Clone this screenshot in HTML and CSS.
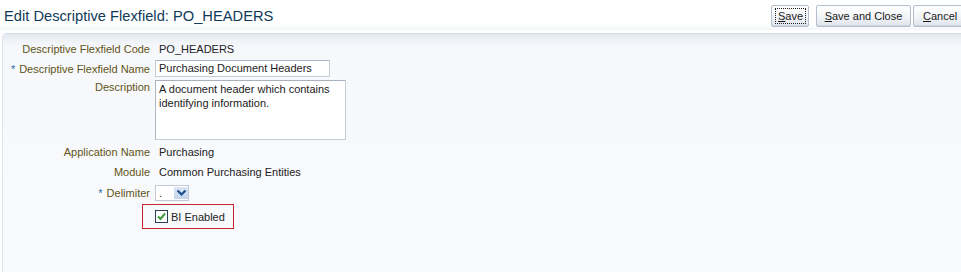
FILE: index.html
```html
<!DOCTYPE html>
<html>
<head>
<meta charset="utf-8">
<link rel="stylesheet" href="styles.css">
</head>
<body>
<div class="page">
  <header class="header">
    <h1 class="title">Edit Descriptive Flexfield: PO_HEADERS</h1>
    <div class="actions">
      <button class="btn btn-save"><span class="focus"><u>S</u>ave</span></button>
      <button class="btn btn-sc"><u>S</u>ave and Close</button>
      <button class="btn btn-cancel"><u>C</u>ancel</button>
    </div>
  </header>
  <div class="panel">
    <div class="form">
      <div class="label r1">Descriptive Flexfield Code</div>
      <div class="value r1"><span class="text">PO_HEADERS</span></div>

      <div class="label r2"><span class="req">*</span><span>Descriptive Flexfield Name</span></div>
      <div class="value r2"><div class="input">Purchasing Document Headers</div></div>

      <div class="label r3 top">Description</div>
      <div class="value r3"><div class="textarea">A document header which contains identifying information.</div></div>

      <div class="label r4">Application Name</div>
      <div class="value r4"><span class="text">Purchasing</span></div>

      <div class="label r5">Module</div>
      <div class="value r5"><span class="text">Common Purchasing Entities</span></div>

      <div class="label r6"><span class="req">*</span><span>Delimiter</span></div>
      <div class="value r6">
        <div class="select"><span class="sel-text">.</span><span class="sel-btn"><svg width="11" height="8" viewBox="0 0 11 8"><path d="M1.5 1.5 L5.5 5.5 L9.5 1.5" fill="none" stroke="#1f4f8a" stroke-width="2.2"/></svg></span></div>
      </div>

      <div class="value r7">
        <div class="highlight">
          <span class="check"><svg width="11" height="11" viewBox="0 0 11 11"><path d="M2 5.5 L4.5 8 L9 2.5" fill="none" stroke="#3f9a3a" stroke-width="2"/></svg></span>
          <span class="cb-label">BI Enabled</span>
        </div>
      </div>
    </div>
  </div>
</div>
</body>
</html>
```

FILE: styles.css
```css
html, body {
  margin: 0;
  padding: 0;
}
body {
  width: 961px;
  height: 272px;
  overflow: hidden;
  font-family: "Liberation Sans", Arial, sans-serif;
  font-size: 11px;
  background: #ffffff;
}
.page {
  display: flex;
  flex-direction: column;
  height: 272px;
}
.header {
  display: flex;
  justify-content: space-between;
  align-items: flex-start;
  height: 30px;
  flex: none;
  background: linear-gradient(#ffffff 0px, #ffffff 24px, #f3f6f9 30px);
}
.title {
  margin: 7px 0 0 4px;
  font-size: 14.7px;
  font-weight: normal;
  color: #0f3a58;
  line-height: 18px;
}
.actions {
  display: flex;
  margin-top: 5px;
  margin-right: -6px;
}
.btn {
  font-family: "Liberation Sans", Arial, sans-serif;
  font-size: 11px;
  color: #1a1a1a;
  height: 22px;
  padding: 0 6px;
  border: 1px solid #b4bfcb;
  border-radius: 2px;
  background: linear-gradient(#ffffff 0%, #f3f5f8 50%, #dfe5ec 100%);
  box-shadow: inset 0 -1px 0 #cfd6de;
}
.btn-save {
  width: 38px;
  padding: 0 3px;
  margin-right: 7px;
}
.btn-save .focus {
  display: inline-block;
  border: 1px dotted #222;
  padding: 1px 2px;
  line-height: 12px;
}
.btn-sc {
  width: 95px;
  margin-right: 2px;
}
.btn-cancel {
  width: 54px;
  text-align: left;
  padding-left: 9px;
}
.panel {
  flex: 1;
  margin-top: 3px;
  margin-left: 2px;
  border-top: 1px solid #d6dde6;
  border-left: 1px solid #dde2e8;
  border-top-left-radius: 5px;
  background: linear-gradient(#e3e9f1 0px, #eef2f7 6px, #f6f8fb 14px, #f8fafc 100%);
}
.form {
  display: grid;
  grid-template-columns: 147px auto;
  column-gap: 5px;
  grid-template-rows: 17px 19px 61px 18px 18px 19px 25px;
  row-gap: 2px;
  padding-top: 6px;
}
.label {
  grid-column: 1;
  text-align: right;
  color: #5f5418;
  display: flex;
  align-items: center;
  justify-content: flex-end;
  white-space: nowrap;
}
.label.top {
  align-items: flex-start;
  line-height: 14px;
}
.req {
  color: #2f6aa8;
  margin-right: 4px;
}
.value {
  grid-column: 2;
  display: flex;
  align-items: center;
  color: #222;
}
.r1 { grid-row: 1; }
.r2 { grid-row: 2; }
.r3 { grid-row: 3; align-items: flex-start; }
.r4 { grid-row: 4; }
.r5 { grid-row: 5; }
.r6 { grid-row: 6; }
.r7 { grid-row: 7; }
.text {
  padding-left: 4px;
}
.input {
  width: 170px;
  height: 15px;
  line-height: 15px;
  padding-left: 3px;
  background: #fff;
  border: 1px solid #c5ccd4;
  border-top-color: #aeb7c1;
  color: #222;
  white-space: nowrap;
}
.textarea {
  width: 186px;
  height: 57px;
  padding: 1px 0 0 3px;
  line-height: 14px;
  background: #fff;
  border: 1px solid #c5ccd4;
  border-top-color: #a9b2bc;
  border-left-color: #aeb7c1;
  color: #222;
}
.select {
  display: flex;
  align-items: center;
  width: 32px;
  height: 14px;
  background: #fff;
  border: 1px solid #c2cad3;
}
.sel-text {
  width: 16px;
  padding-left: 3px;
  line-height: 14px;
}
.sel-btn {
  display: flex;
  align-items: center;
  justify-content: center;
  width: 14px;
  height: 12px;
  background: linear-gradient(#dbe6f4, #c2d4ec);
  border-radius: 1px;
}
.highlight {
  display: flex;
  align-items: center;
  margin-left: -13px;
  width: 90px;
  height: 23px;
  border: 1px solid #c8262e;
}
.check {
  display: flex;
  align-items: center;
  justify-content: center;
  margin-left: 12px;
  width: 11px;
  height: 11px;
  border: 1px solid #2a3f55;
  background: #fff;
}
.cb-label {
  margin-left: 3px;
  color: #222;
}
```
